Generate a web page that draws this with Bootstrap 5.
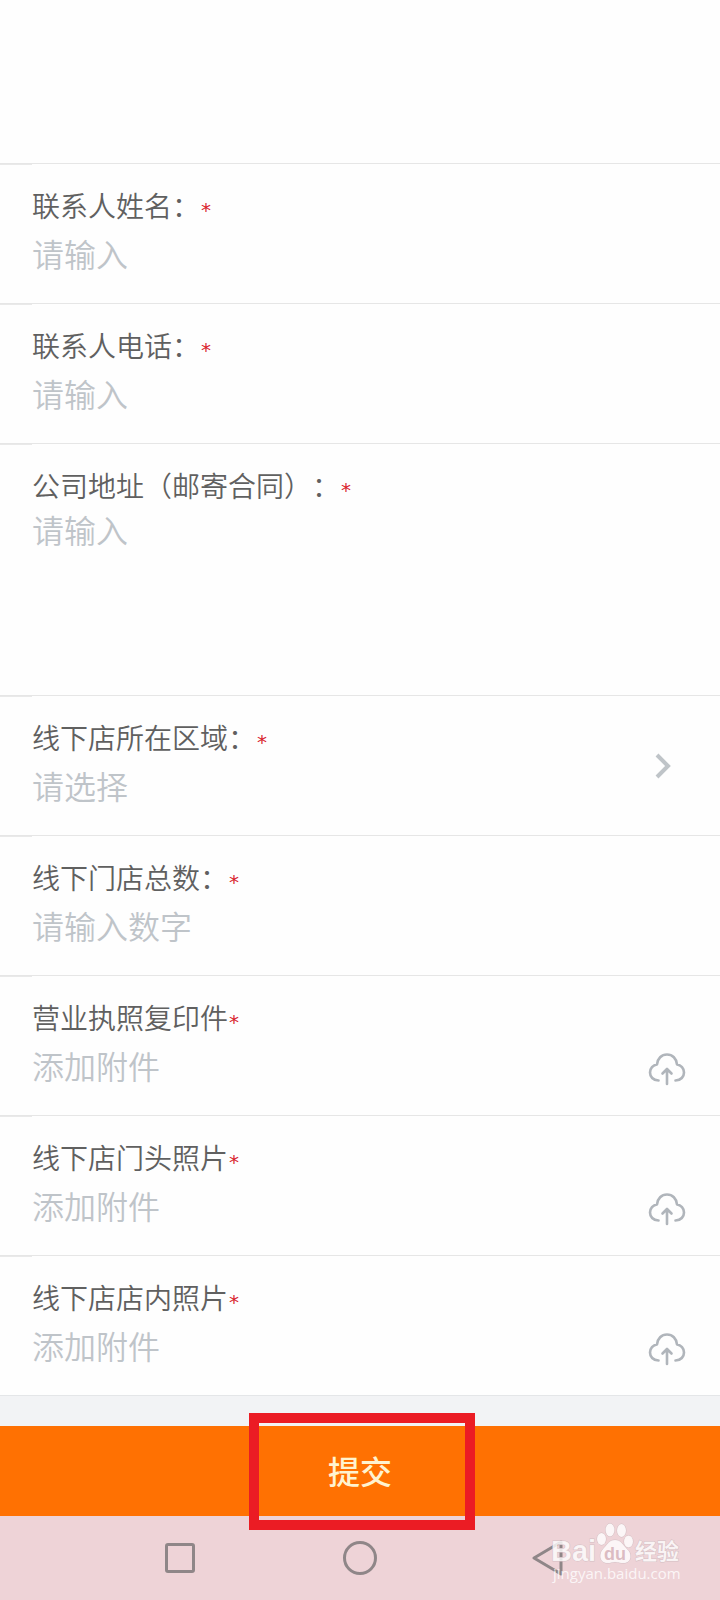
<!DOCTYPE html>
<html lang="zh-CN">
<head>
<meta charset="utf-8">
<meta name="viewport" content="width=device-width, initial-scale=1">
<title>线下门店信息</title>
<link href="https://cdn.jsdelivr.net/npm/bootstrap@5.3.0/dist/css/bootstrap.min.css" rel="stylesheet">
<style>
body { font-family: "Noto Sans CJK SC", sans-serif; background: #fefefe; color: #666; }
.form-intro { height: 163px; }
.form-row { position: relative; border-top: 1px solid #e6e6e6; padding: 23px 32px 27px; }
.form-row::before { content: ""; position: absolute; left: 0; top: 0; width: 32px; height: 1px; background: #e9e9e9; }
.form-row.area { padding-bottom: 0; }
.label-line { margin-bottom: 7px; }
.area .label-line { margin-bottom: 3px; }
.row-label { font-size: 28px; line-height: 36px; font-weight: 350; color: #606060; font-kerning: none; text-spacing-trim: space-all; font-feature-settings: "chws" 0, "halt" 0, "kern" 0; }
.req { font-family: "DejaVu Sans", sans-serif; font-size: 20px; line-height: 36px; padding: 5px 0 0 1px; height: 36px; color: #d9232e; }
.field { font-size: 32px; line-height: 46px; height: 46px; font-weight: 350; color: #bfc4c9; background: transparent; border: 0; padding: 0; width: 100%; border-radius: 0; appearance: none; outline: 0; text-align: left; display: block; }
.field::placeholder { color: #bfc4c9; opacity: 1; }
textarea.field { height: 189px; resize: none; }
.chev { position: absolute; right: 47px; top: 50%; margin-top: -14px; pointer-events: none; }
.cloud { color: #b0b5bb; margin: 8px 2px 0 0; }
.form-foot { height: 31px; background: #f2f3f5; border-top: 1px solid #e4e6e8; }
.submit-btn { height: 90px; border: 0; background: #ff7102; color: #fff3d0; font-size: 32px; line-height: 88px; font-weight: 500; padding: 0 0 2px; }
.frame { position: absolute; top: -13px; bottom: -14px; left: 50%; width: 226px; margin-left: -111px; border: 10px solid #eb1c24; pointer-events: none; z-index: 2; }
.sysbar { height: 84px; background: #eed3d7; padding: 0 12.5%; color: #8f8688; }
.watermark { position: absolute; right: 36px; top: 4px; }
</style>
</head>
<body>
<form class="mb-0">
  <div class="form-intro"></div>

  <div class="form-row">
    <div class="d-flex label-line"><label class="row-label" for="name">联系人姓名：</label><span class="req">*</span></div>
    <input class="field" id="name" type="text" placeholder="请输入">
  </div>
  <div class="form-row">
    <div class="d-flex label-line"><label class="row-label" for="phone">联系人电话：</label><span class="req">*</span></div>
    <input class="field" id="phone" type="tel" placeholder="请输入">
  </div>
  <div class="form-row area">
    <div class="d-flex label-line"><label class="row-label" for="addr">公司地址（邮寄合同<span class="d-inline-block">）</span><span class="d-inline-block">：</span></label><span class="req">*</span></div>
    <textarea class="field" id="addr" placeholder="请输入"></textarea>
  </div>
  <div class="form-row">
    <div class="d-flex label-line"><label class="row-label" for="region">线下店所在区域：</label><span class="req">*</span></div>
    <select class="field" id="region"><option>请选择</option></select>
    <svg class="chev" width="20" height="28" viewBox="0 0 20 28" fill="none" stroke="#bfc4c8" stroke-width="4"><path d="M4 3l11 11L4 25"/></svg>
  </div>
  <div class="form-row">
    <div class="d-flex label-line"><label class="row-label" for="count">线下门店总数：</label><span class="req">*</span></div>
    <input class="field" id="count" type="text" inputmode="numeric" placeholder="请输入数字">
  </div>

  <div class="form-row">
    <div class="d-flex label-line"><label class="row-label" for="licence">营业执照复印件</label><span class="req">*</span></div>
    <button class="field d-flex justify-content-between align-items-center" id="licence" type="button"><span>添加附件</span><svg class="cloud" width="38" height="34" viewBox="0 0 38 34" fill="none" stroke="currentColor" stroke-width="2.6" stroke-linecap="round" stroke-linejoin="round"><path d="M10.500 28.500C5 28.500 2 24.500 2 20.500C2 16.500 5 13 9 12.500C9.500 6.500 13.500 2.500 19 2.500S28.500 6.500 29 12.500C33 13 36 16.500 36 20.500C36 24.500 33 28.500 27.500 28.500M19 32V18M14.500 21.500L19 17L23.500 21.500"/></svg></button>
  </div>
  <div class="form-row">
    <div class="d-flex label-line"><label class="row-label" for="front">线下店门头照片</label><span class="req">*</span></div>
    <button class="field d-flex justify-content-between align-items-center" id="front" type="button"><span>添加附件</span><svg class="cloud" width="38" height="34" viewBox="0 0 38 34" fill="none" stroke="currentColor" stroke-width="2.6" stroke-linecap="round" stroke-linejoin="round"><path d="M10.500 28.500C5 28.500 2 24.500 2 20.500C2 16.500 5 13 9 12.500C9.500 6.500 13.500 2.500 19 2.500S28.500 6.500 29 12.500C33 13 36 16.500 36 20.500C36 24.500 33 28.500 27.500 28.500M19 32V18M14.500 21.500L19 17L23.500 21.500"/></svg></button>
  </div>
  <div class="form-row">
    <div class="d-flex label-line"><label class="row-label" for="inside">线下店店内照片</label><span class="req">*</span></div>
    <button class="field d-flex justify-content-between align-items-center" id="inside" type="button"><span>添加附件</span><svg class="cloud" width="38" height="34" viewBox="0 0 38 34" fill="none" stroke="currentColor" stroke-width="2.6" stroke-linecap="round" stroke-linejoin="round"><path d="M10.500 28.500C5 28.500 2 24.500 2 20.500C2 16.500 5 13 9 12.500C9.500 6.500 13.500 2.500 19 2.500S28.500 6.500 29 12.500C33 13 36 16.500 36 20.500C36 24.500 33 28.500 27.500 28.500M19 32V18M14.500 21.500L19 17L23.500 21.500"/></svg></button>
  </div>

  <div class="form-foot"></div>
  <div class="position-relative">
    <button class="submit-btn d-block w-100" type="submit">提交</button>
    <div class="frame"></div>
  </div>
</form>

<nav class="sysbar position-relative d-flex align-items-center">
  <div class="flex-fill text-center"><svg width="48" height="36" viewBox="0 0 48 36" fill="none" stroke="currentColor" stroke-width="3"><rect x="10.500" y="4.500" width="27" height="27" rx="1.500"/></svg></div>
  <div class="flex-fill text-center"><svg width="48" height="36" viewBox="0 0 48 36" fill="none" stroke="currentColor" stroke-width="3"><circle cx="24" cy="18" r="15.500"/></svg></div>
  <div class="flex-fill text-center"><svg width="48" height="36" viewBox="0 0 48 36" fill="none" stroke="currentColor" stroke-width="3" stroke-linejoin="round"><path d="M45 2V34L18 18Z"/></svg></div>
  <svg class="watermark" width="136" height="66" viewBox="0 0 136 66" fill="#fff" fill-opacity=".8" stroke="#d5bfc4" stroke-width="1" paint-order="stroke">
    <text x="3" y="41" font-family="Liberation Sans, sans-serif" font-weight="700" font-size="29">Bai</text>
    <ellipse cx="53.500" cy="19" rx="4.500" ry="6"/><ellipse cx="62" cy="10" rx="4.500" ry="6.500"/><ellipse cx="73.500" cy="10.500" rx="4.500" ry="6.500"/><ellipse cx="80.500" cy="21.500" rx="4.500" ry="6"/>
    <path d="M67 20C61 20 59 25 55 29C51 33 51 42 58 43C62 43.500 64 42 67 42S73 43.500 77 43C84 42 84 33 79 29C75 25 73 20 67 20Z"/>
    <text x="67" y="40" text-anchor="middle" font-family="Liberation Sans, sans-serif" font-weight="700" font-size="18" fill="#d3adb4" stroke="none">du</text>
    <text x="87" y="39" font-family="Noto Sans CJK SC, sans-serif" font-weight="700" font-size="22">经验</text>
    <text x="5" y="59" font-family="Open Sans, sans-serif" font-size="15" stroke="none">jingyan.baidu.com</text>
  </svg>
</nav>
<script src="https://cdn.jsdelivr.net/npm/bootstrap@5.3.0/dist/js/bootstrap.bundle.min.js"></script>
</body>
</html>
